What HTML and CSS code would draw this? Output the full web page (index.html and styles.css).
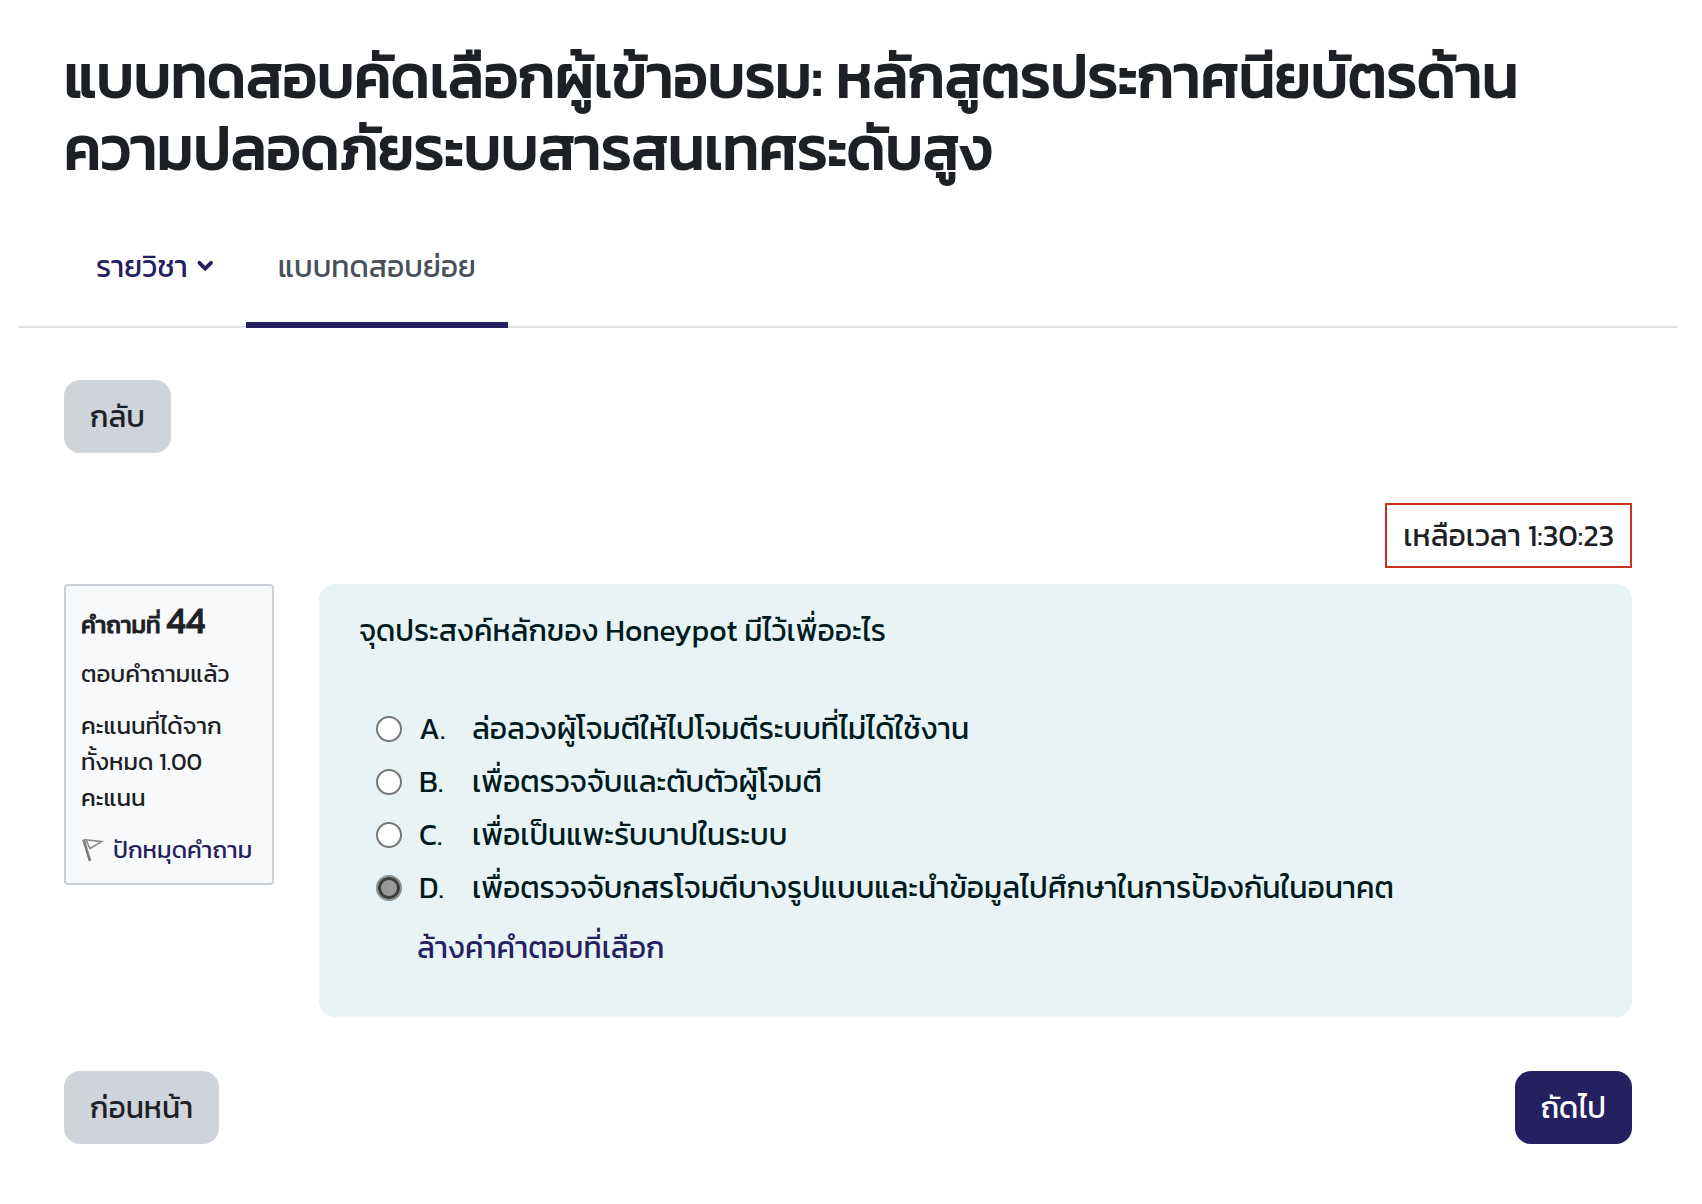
FILE: index.html
```
<!DOCTYPE html>
<html lang="th">
<head>
    <meta charset="UTF-8">
    <meta name="viewport" content="width=device-width, initial-scale=1.0">
    <title>แบบทดสอบย่อย</title>
    <link rel="stylesheet" href="styles.css">
</head>
<body>
    <header class="page-header">
        <h1>แบบทดสอบคัดเลือกผู้เข้าอบรม: หลักสูตรประกาศนียบัตรด้านความปลอดภัยระบบสารสนเทศระดับสูง</h1>
    </header>

    <nav class="tabs">
        <a class="tab" href="#">รายวิชา
            <svg class="chevron" viewBox="0 0 18 12"><path d="M3.4 2.8L9.2 8.6L15 2.8" fill="none" stroke="currentColor" stroke-width="3.8" stroke-linecap="round" stroke-linejoin="miter"/></svg>
        </a>
        <a class="tab active" href="#">แบบทดสอบย่อย</a>
    </nav>

    <main class="content">
        <button class="btn btn-secondary" type="button">กลับ</button>

        <div class="timer-row">
            <div class="timer">เหลือเวลา 1:30:23</div>
        </div>

        <form>
            <div class="question">
                <aside class="info">
                    <h2>คำถามที่ <span class="qno">44</span></h2>
                    <p>ตอบคำถามแล้ว</p>
                    <p>คะแนนที่ได้จากทั้งหมด 1.00 คะแนน</p>
                    <a class="flag" href="#">
                        <svg class="flag-icon" viewBox="0 0 24 26">
                            <path d="M2.5 2.5L9 24" fill="none" stroke="#7d7d7d" stroke-width="2.6"/>
                            <path d="M5 2.8L20.5 4.6 9 11.5Z" fill="#fff" stroke="#8a8a8a" stroke-width="1.6"/>
                        </svg>
                        <span>ปักหมุดคำถาม</span>
                    </a>
                </aside>

                <fieldset class="formulation">
                    <legend>จุดประสงค์หลักของ Honeypot มีไว้เพื่ออะไร</legend>
                    <div class="answers">
                        <label class="answer">
                            <input type="radio" name="answer" value="a">
                            <span class="letter">A.</span>
                            <span>ล่อลวงผู้โจมตีให้ไปโจมตีระบบที่ไม่ได้ใช้งาน</span>
                        </label>
                        <label class="answer">
                            <input type="radio" name="answer" value="b">
                            <span class="letter">B.</span>
                            <span>เพื่อตรวจจับและตับตัวผู้โจมตี</span>
                        </label>
                        <label class="answer">
                            <input type="radio" name="answer" value="c">
                            <span class="letter">C.</span>
                            <span>เพื่อเป็นแพะรับบาปในระบบ</span>
                        </label>
                        <label class="answer">
                            <input type="radio" name="answer" value="d" checked>
                            <span class="letter">D.</span>
                            <span>เพื่อตรวจจับกสรโจมตีบางรูปแบบและนำข้อมูลไปศึกษาในการป้องกันในอนาคต</span>
                        </label>
                    </div>
                    <a class="clear" href="#">ล้างค่าคำตอบที่เลือก</a>
                </fieldset>
            </div>

            <div class="quiz-nav">
                <button class="btn btn-secondary" type="button">ก่อนหน้า</button>
                <button class="btn btn-primary" type="button">ถัดไป</button>
            </div>
        </form>
    </main>
</body>
</html>
```

FILE: styles.css
```
* {
    box-sizing: border-box;
}

body {
    margin: 0;
    font-family: Kanit, "Noto Sans Thai", "Noto Sans", sans-serif;
    font-size: 30px;
    line-height: 45px;
    color: #1d2125;
    background-color: #fff;
}

h1, h2, p {
    margin: 0;
}

a {
    color: #252060;
    text-decoration: none;
}

.page-header {
    padding: 40px 64px 0;
}

/* regular cut thickened with a stroke, the bold cuts run too wide */
h1 {
    font-size: 60px;
    line-height: 72px;
    font-weight: 400;
    -webkit-text-stroke: 2px currentColor;
}

/* tabs */
.tabs {
    display: flex;
    margin: 26px 24px 0 18px;
    padding-left: 46px;
    border-bottom: 2px solid #dee2e6;
}

.tab {
    display: flex;
    align-items: center;
    gap: 8px;
    height: 118px;
    padding: 0 32px;
    margin-bottom: -2px;
    border-bottom: 6px solid transparent;
}

.tab.active {
    color: #495057;
    border-bottom-color: #252060;
}

.chevron {
    width: 18px;
    height: 12px;
}

.content {
    padding: 52px 70px 60px 64px;
}

/* buttons */
.btn {
    display: block;
    height: 73px;
    padding: 0 26px;
    border: none;
    border-radius: 16px;
    font: inherit;
    cursor: pointer;
}

.btn-secondary {
    background-color: #ced4da;
    color: #1d2125;
}

.btn-primary {
    background-color: #252060;
    color: #fff;
}

.timer-row {
    display: flex;
    justify-content: flex-end;
    margin: 50px 0 16px;
}

.timer {
    padding: 8px 16px;
    border: 2px solid #ca3120;
}

.question {
    display: flex;
    align-items: flex-start;
    gap: 45px;
}

/* question info box */
.info {
    flex: 0 0 210px;
    padding: 15px;
    border: 2px solid #cad0d7;
    border-radius: 4px;
    background-color: #f8f9fa;
    font-size: 24px;
    line-height: 36px;
}

.info h2 {
    margin-bottom: 12px;
    font-size: 24px;
    line-height: 38px;
    font-weight: 400;
    -webkit-text-stroke: 1px currentColor;
}

.info .qno {
    font-size: 36px;
}

.info p {
    margin-bottom: 16px;
}

.flag {
    display: flex;
    align-items: center;
    gap: 8px;
    white-space: nowrap;
}

.flag-icon {
    width: 24px;
    height: 26px;
}

/* question and answers */
.formulation {
    flex: 1;
    min-width: 0;
    margin: 0;
    padding: 24px 40px 47px;
    border: none;
    border-radius: 16px;
    background-color: #e7f3f5;
    color: #001a1e;
}

.formulation legend {
    float: left;
    width: 100%;
    padding: 0;
    margin-bottom: 53px;
}

.answers {
    clear: both;
    display: flex;
    flex-direction: column;
    gap: 8px;
    padding-left: 17px;
}

.answer {
    display: flex;
    align-items: center;
}

.answer input {
    appearance: none;
    flex: none;
    width: 26px;
    height: 26px;
    margin: 0 17px 0 0;
    border: 2px solid #767676;
    border-radius: 50%;
    background-color: #fff;
}

.answer input:checked {
    border-color: #8f8f8f;
    background-color: #999;
    box-shadow: inset 0 0 0 3px #3b3b3b;
}

.letter {
    width: 53px;
}

.clear {
    display: block;
    margin: 15px 0 0 58px;
}

.quiz-nav {
    display: flex;
    justify-content: space-between;
    margin-top: 54px;
}
```
